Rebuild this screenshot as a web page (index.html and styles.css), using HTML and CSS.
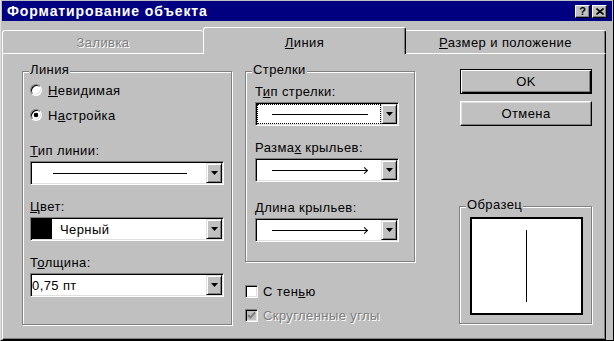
FILE: index.html
```html
<!DOCTYPE html>
<html lang="ru">
<head>
  <meta charset="UTF-8">
  <title>Форматирование объекта</title>
  <link rel="stylesheet" href="styles.css">
</head>
<body>

<div class="window">
  <div class="titlebar">
    <span class="title">Форматирование объекта</span>
    <span class="cap-btns">
      <span class="cap-btn">?</span>
      <span class="cap-btn"><svg width="8" height="7" viewBox="0 0 8 7"><path d="M0.5 0.5 L7.5 6.5 M7.5 0.5 L0.5 6.5" stroke="#000" stroke-width="1.6"/></svg></span>
    </span>
  </div>

  <div class="tabs">
    <div class="tab tab-first disabled">Заливка</div>
    <div class="tab active"><u>Л</u>иния</div>
    <div class="tab tab-last"><u>Р</u>азмер и положение</div>
  </div>

  <div class="page">
    <div class="group group-line">
      <span class="legend">Линия</span>
      <div class="opt-row first"><span class="radio"></span><u>Н</u>евидимая</div>
      <div class="opt-row"><span class="radio checked"></span>Н<u>а</u>стройка</div>

      <div class="lbl lbl-first"><u>Т</u>ип линии:</div>
      <div class="select wide">
        <div class="field"><span class="line"></span></div>
        <div class="drop"><svg width="7" height="4"><path d="M0 0 H7 L3.5 4 Z" fill="#000"/></svg></div>
      </div>

      <div class="lbl"><u>Ц</u>вет:</div>
      <div class="select wide">
        <div class="field"><span class="swatch"></span>Черный</div>
        <div class="drop"><svg width="7" height="4"><path d="M0 0 H7 L3.5 4 Z" fill="#000"/></svg></div>
      </div>

      <div class="lbl">Т<u>о</u>лщина:</div>
      <div class="select wide">
        <div class="field">0,75 пт</div>
        <div class="drop"><svg width="7" height="4"><path d="M0 0 H7 L3.5 4 Z" fill="#000"/></svg></div>
      </div>
    </div>

    <div class="col-mid">
      <div class="group group-arrows">
        <span class="legend">Стрелки</span>

        <div class="lbl lbl-top">Т<u>и</u>п стрелки:</div>
        <div class="select narrow">
          <div class="field focus"><span class="line"></span></div>
          <div class="drop"><svg width="7" height="4"><path d="M0 0 H7 L3.5 4 Z" fill="#000"/></svg></div>
        </div>

        <div class="lbl">Разма<u>х</u> крыльев:</div>
        <div class="select narrow">
          <div class="field"><span class="line arrow"></span></div>
          <div class="drop"><svg width="7" height="4"><path d="M0 0 H7 L3.5 4 Z" fill="#000"/></svg></div>
        </div>

        <div class="lbl lbl-last"><u>Д</u>лина крыльев:</div>
        <div class="select narrow">
          <div class="field"><span class="line arrow"></span></div>
          <div class="drop"><svg width="7" height="4"><path d="M0 0 H7 L3.5 4 Z" fill="#000"/></svg></div>
        </div>
      </div>

      <div class="check-row first"><span class="check"></span>С тен<u>ь</u>ю</div>
      <div class="check-row disabled"><span class="check checked-off"><svg width="9" height="9" viewBox="0 0 9 9"><path d="M1 4 L3.5 6.5 L8 1.5" stroke="#808080" stroke-width="2" fill="none"/></svg></span>Скругленные углы</div>
    </div>

    <div class="col-right">
      <button class="btn btn-default">OK</button>
      <button class="btn btn-cancel">Отмена</button>
      <div class="group group-sample">
        <span class="legend">Образец</span>
        <div class="preview"><span class="preview-line"></span></div>
      </div>
    </div>
  </div>
</div>

</body>
</html>
```

FILE: styles.css
```css
body {
  margin: 0;
  background-color: #c0c0c0;
}
.window {
  width: 614px;
  height: 341px;
  box-sizing: border-box;
  background-color: #c0c0c0;
  border-left: 1px solid #dfdfdf;
  border-right: 1px solid #000;
  border-bottom: 1px solid #000;
  padding: 1px 1px 0 1px;
  font-family: "Liberation Sans", Arial, sans-serif;
  font-size: 13px;
  letter-spacing: 0.4px;
  color: #000;
}

/* title bar */
.titlebar {
  height: 20px;
  background-color: #000080;
  color: #fff;
  display: flex;
  align-items: center;
  padding: 0 5px 0 5px;
}
.title {
  font-weight: bold;
  font-size: 14px;
  letter-spacing: 0.9px;
}
.cap-btns {
  margin-left: auto;
  display: flex;
  gap: 2px;
}
.cap-btn {
  width: 15px;
  height: 13px;
  box-sizing: border-box;
  background-color: #c0c0c0;
  border: 1px solid;
  border-color: #fff #000 #000 #fff;
  box-shadow: inset -1px -1px #808080;
  display: flex;
  align-items: center;
  justify-content: center;
  color: #000;
  font-size: 11px;
  font-weight: bold;
  letter-spacing: 0;
  line-height: 10px;
}

/* tabs */
.tabs {
  display: flex;
  align-items: flex-end;
  height: 26px;
  width: 604px;
  margin-top: 6px;
}
.tab {
  box-sizing: border-box;
  height: 23px;
  border-top: 1px solid #fff;
  border-left: 1px solid #fff;
  border-right: 1px solid #000;
  box-shadow: inset -1px 0 #808080;
  border-radius: 3px 3px 0 0;
  text-align: center;
  line-height: 16px;
  padding-top: 4px;
  background-color: #c0c0c0;
}
.tab-first {
  width: 201px;
  border-right: 0;
  box-shadow: none;
}
.tab.active {
  width: 203px;
  height: 27px;
  padding-top: 7px;
  margin-bottom: -1px;
  position: relative;
  z-index: 1;
}
.tab-last {
  width: 200px;
  border-left: 0;
  border-top-left-radius: 0;
}
.disabled {
  color: #808080;
  text-shadow: 1px 1px #fff;
}

/* tab page */
.page {
  box-sizing: border-box;
  width: 604px;
  height: 287px;
  border-top: 1px solid #fff;
  border-left: 1px solid #fff;
  border-right: 1px solid #000;
  border-bottom: 1px solid #000;
  box-shadow: inset -1px -1px #808080;
  padding: 15px 0 0 19px;
  display: flex;
  align-items: flex-start;
}

/* group boxes */
.group {
  box-sizing: border-box;
  border: 1px solid #808080;
  box-shadow: 1px 1px #fff, inset 1px 1px #fff;
  display: flex;
  flex-direction: column;
  align-items: flex-start;
}
.legend {
  height: 14px;
  line-height: 14px;
  margin: -9px 0 -5px -1px;
  padding: 0 1px;
  background-color: #c0c0c0;
}
.group-line {
  width: 210px;
  height: 254px;
  margin-top: 2px;
  padding-left: 7px;
}
.group-arrows {
  width: 170px;
  height: 191px;
  padding-left: 9px;
}
.group-arrows .legend {
  margin-left: -3px;
}
.group-sample {
  width: 133px;
  height: 118px;
  margin-top: 80px;
  padding-left: 10px;
}
.group-sample .legend {
  margin-left: -4px;
}

/* radio and check rows */
.opt-row, .check-row {
  display: flex;
  align-items: center;
  height: 24px;
}
.opt-row {
  margin-top: 1px;
}
.opt-row.first {
  margin-top: 6px;
}
.radio {
  width: 12px;
  height: 12px;
  box-sizing: border-box;
  border-radius: 50%;
  border: 1px solid;
  border-color: #808080 #fff #fff #808080;
  box-shadow: inset 1px 1px #000, inset -1px -1px #dfdfdf;
  background-color: #fff;
  margin-right: 6px;
}
.radio.checked {
  background: radial-gradient(circle, #000 2px, #fff 2.6px);
}
.check-row.first {
  margin-top: 17px;
}
.check {
  width: 13px;
  height: 13px;
  box-sizing: border-box;
  border: 1px solid;
  border-color: #808080 #fff #fff #808080;
  box-shadow: inset 1px 1px #000, inset -1px -1px #dfdfdf;
  background-color: #fff;
  margin-right: 5px;
  display: flex;
  align-items: center;
  justify-content: center;
}
.check.checked-off {
  background-color: #c0c0c0;
}

/* labels and drop-down fields */
.lbl {
  line-height: 16px;
  margin-top: 14px;
  margin-bottom: 2px;
}
.lbl-first {
  margin-top: 16px;
}
.lbl-top {
  margin-top: 12px;
}
.lbl-last {
  margin-top: 18px;
}
.select {
  display: flex;
  box-sizing: border-box;
  height: 24px;
  border: 1px solid;
  border-color: #808080 #fff #fff #808080;
  box-shadow: inset 1px 1px #000, inset -1px -1px #dfdfdf;
  padding: 1px;
  background-color: #fff;
}
.select.wide {
  width: 194px;
}
.select.narrow {
  width: 144px;
}
.field {
  flex: 1;
  display: flex;
  align-items: center;
  box-sizing: border-box;
}
.field.focus {
  outline: 1px dotted #000;
  outline-offset: -1px;
}
.drop {
  width: 16px;
  box-sizing: border-box;
  border: 1px solid;
  border-color: #dfdfdf #000 #000 #dfdfdf;
  box-shadow: inset 1px 1px #fff, inset -1px -1px #808080;
  background-color: #c0c0c0;
  display: flex;
  align-items: center;
  justify-content: center;
}
.line {
  flex: 1;
  height: 1px;
  background-color: #000;
  margin: 0 19px 0 21px;
}
.narrow .line {
  margin: 0 13px 0 15px;
}
.line.arrow {
  position: relative;
}
.line.arrow::after {
  content: "";
  position: absolute;
  right: 1px;
  top: -2px;
  width: 5px;
  height: 5px;
  box-sizing: border-box;
  border-top: 1px solid #000;
  border-right: 1px solid #000;
  transform: rotate(45deg);
}
.swatch {
  width: 20px;
  align-self: stretch;
  background-color: #000;
  margin-right: 8px;
}

/* right column */
.col-mid {
  margin-left: 13px;
  margin-top: 2px;
  display: flex;
  flex-direction: column;
}
.col-right {
  margin-left: 44px;
  display: flex;
  flex-direction: column;
}
.btn {
  box-sizing: border-box;
  width: 132px;
  height: 25px;
  margin-left: 1px;
  padding: 0;
  background-color: #c0c0c0;
  border: 1px solid;
  border-color: #fff #000 #000 #fff;
  box-shadow: inset -1px -1px #808080, inset 1px 1px #dfdfdf;
  font-family: inherit;
  font-size: 13px;
  letter-spacing: 0.4px;
  color: #000;
}
.btn-default {
  border-color: #000;
  box-shadow: inset 1px 1px #fff, inset -1px -1px #000, inset -2px -2px #808080;
}
.btn-cancel {
  margin-top: 7px;
}
.preview {
  box-sizing: border-box;
  width: 113px;
  height: 98px;
  margin-top: 10px;
  border: 2px solid #000;
  background-color: #fff;
  display: flex;
  align-items: center;
  justify-content: center;
}
.preview-line {
  width: 1px;
  height: 72px;
  background-color: #000;
}
```
